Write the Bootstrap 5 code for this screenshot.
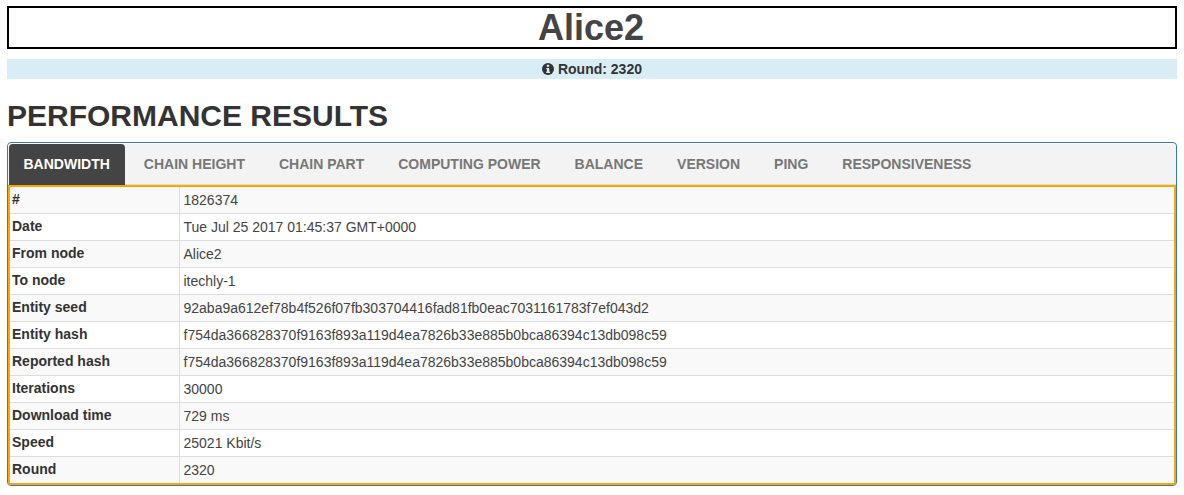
<!DOCTYPE html>
<html lang="en">
<head>
    <meta charset="UTF-8">
    <meta name="viewport" content="width=device-width, initial-scale=1.0">
    <title>Alice2</title>
    <link href="https://cdn.jsdelivr.net/npm/bootstrap@5.3.3/dist/css/bootstrap.min.css" rel="stylesheet">
    <script src="https://cdn.jsdelivr.net/npm/bootstrap@5.3.3/dist/js/bootstrap.bundle.min.js"></script>
    <style>
        body { font-family: "Liberation Sans", Arial, sans-serif; font-size: 14px; color: #333; background: #fff; }
        .page-wrap { padding: 6px 7px 0; }
        .node-title { border: 2px solid #000; color: #444; font-size: 36px; font-weight: 700; line-height: 39px; text-align: center; margin: 0 0 10px; padding-right: 2px; }
        .round-bar { background: #d9edf7; font-size: 14px; font-weight: 700; line-height: 20px; height: 20px; text-align: center; color: #333; margin-bottom: 20px; }
        .round-bar svg { vertical-align: -1px; }
        .results-title { font-size: 30px; font-weight: 700; line-height: 33px; color: #333; margin: 0 0 10px; }
        .results-panel { border: 1px solid #337ab7; border-radius: 4px; padding: 1px 0 0; box-shadow: 0 1px 1px rgba(0,0,0,.05); }
        .tab-strip { background: #f3f3f3; height: 41px; border-bottom: 1px solid #ddd; padding: 0; flex-wrap: nowrap; border-radius: 4px 4px 0 0; }
        .tab-strip .nav-link { color: #777; font-size: 14px; font-weight: 700; text-transform: uppercase; padding: 0 17px; line-height: 41px; height: 41px; border-radius: 4px 4px 0 0; }
        .tab-strip .nav-link.active { background: #444; color: #fff; height: 41px; padding: 0 15.5px 0 14.5px; margin: 0 1.5px 0 1px; }
        .detail-box { border: 2px solid orange; border-radius: 0 0 3px 3px; margin-top: 0; }
        .detail-table { width: 100%; margin: 0; border-collapse: collapse; color: #333; }
        .detail-table th, .detail-table td { height: 27px; padding: 1px 2px 0 2px; font-size: 14px; line-height: 20px; vertical-align: middle; border-top: 1px solid #ddd; }
        .detail-table tr:first-child th, .detail-table tr:first-child td { border-top: 0; height: 26px; }
        .detail-table tr:nth-child(odd) { background: #f9f9f9; }
        .detail-table th { width: 169px; font-weight: 700; padding-top: 0; padding-bottom: 2px; border-right: 1px solid #ddd; }
        .detail-table td { padding-left: 4px; color: #444; }
    </style>
</head>
<body>
    <div class="page-wrap">
        <h1 class="node-title">Alice2</h1>
        <div class="round-bar">
            <svg width="12" height="12" viewBox="0 0 12 12" aria-hidden="true"><circle cx="6" cy="6" r="6" fill="#333"/><rect x="4.8" y="1.8" width="2.4" height="2" fill="#d9edf7"/><path d="M4.2 5h3v3.6h.8v1.4H4.2V8.6h.8V6.3h-.8z" fill="#d9edf7"/></svg>
            Round: 2320
        </div>
        <h2 class="results-title">PERFORMANCE RESULTS</h2>
        <div class="results-panel">
            <ul class="nav tab-strip">
                <li class="nav-item"><a class="nav-link active" href="#">Bandwidth</a></li>
                <li class="nav-item"><a class="nav-link" href="#">Chain height</a></li>
                <li class="nav-item"><a class="nav-link" href="#">Chain part</a></li>
                <li class="nav-item"><a class="nav-link" href="#">Computing power</a></li>
                <li class="nav-item"><a class="nav-link" href="#">Balance</a></li>
                <li class="nav-item"><a class="nav-link" href="#">Version</a></li>
                <li class="nav-item"><a class="nav-link" href="#">Ping</a></li>
                <li class="nav-item"><a class="nav-link" href="#">Responsiveness</a></li>
            </ul>
            <div class="detail-box">
                <table class="detail-table">
                    <tbody>
                        <tr><th>#</th><td>1826374</td></tr>
                        <tr><th>Date</th><td>Tue Jul 25 2017 01:45:37 GMT+0000</td></tr>
                        <tr><th>From node</th><td>Alice2</td></tr>
                        <tr><th>To node</th><td>itechly-1</td></tr>
                        <tr><th>Entity seed</th><td>92aba9a612ef78b4f526f07fb303704416fad81fb0eac7031161783f7ef043d2</td></tr>
                        <tr><th>Entity hash</th><td>f754da366828370f9163f893a119d4ea7826b33e885b0bca86394c13db098c59</td></tr>
                        <tr><th>Reported hash</th><td>f754da366828370f9163f893a119d4ea7826b33e885b0bca86394c13db098c59</td></tr>
                        <tr><th>Iterations</th><td>30000</td></tr>
                        <tr><th>Download time</th><td>729 ms</td></tr>
                        <tr><th>Speed</th><td>25021 Kbit/s</td></tr>
                        <tr><th>Round</th><td>2320</td></tr>
                    </tbody>
                </table>
            </div>
        </div>
    </div>
</body>
</html>
